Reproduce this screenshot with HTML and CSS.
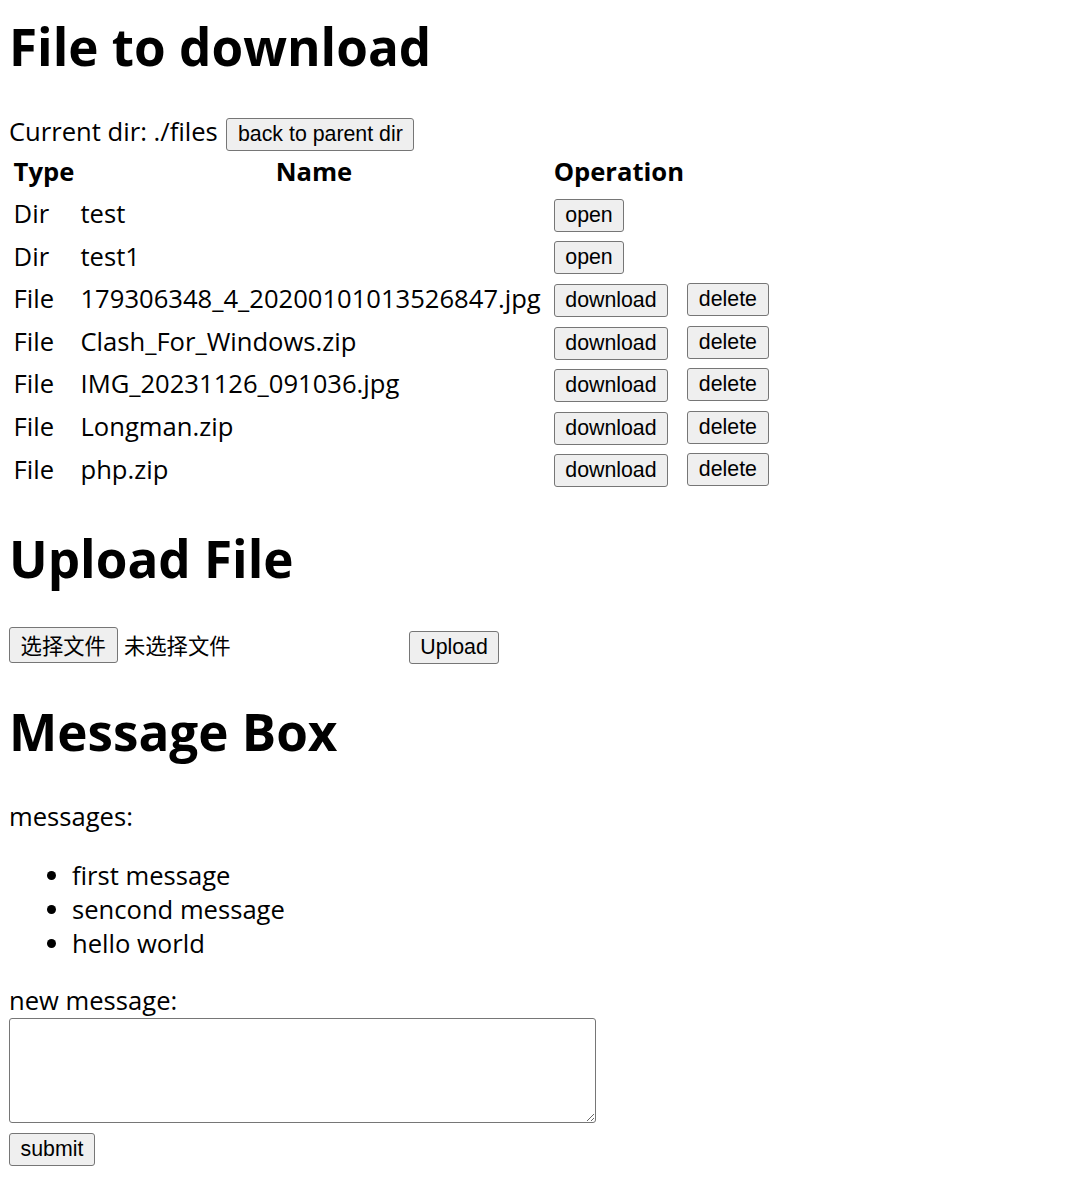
FILE: index.html
```html
<!DOCTYPE html>
<html lang="en">
<head>
<meta charset="utf-8">
<title>File Server</title>
<link rel="stylesheet" href="styles.css">
</head>
<body>
<h1 class="title first">File to download</h1>
<div class="cur">Current dir: ./files <button class="btn">back to parent dir</button></div>
<table class="files">
  <tr><th>Type</th><th class="name-col">Name</th><th>Operation</th></tr>
  <tr><td>Dir</td><td>test</td><td><button class="btn">open</button></td></tr>
  <tr><td>Dir</td><td>test1</td><td><button class="btn">open</button></td></tr>
  <tr><td>File</td><td>179306348_4_20200101013526847.jpg</td><td><button class="btn">download</button></td><td><button class="btn del">delete</button></td></tr>
  <tr><td>File</td><td>Clash_For_Windows.zip</td><td><button class="btn">download</button></td><td><button class="btn del">delete</button></td></tr>
  <tr><td>File</td><td>IMG_20231126_091036.jpg</td><td><button class="btn">download</button></td><td><button class="btn del">delete</button></td></tr>
  <tr><td>File</td><td>Longman.zip</td><td><button class="btn">download</button></td><td><button class="btn del">delete</button></td></tr>
  <tr><td>File</td><td>php.zip</td><td><button class="btn">download</button></td><td><button class="btn del">delete</button></td></tr>
</table>

<h1 class="title">Upload File</h1>
<form class="upload">
  <span class="file"><button type="button" class="btn pick">选择文件</button><span class="none">未选择文件</span></span>
  <button type="button" class="btn">Upload</button>
</form>

<h1 class="title">Message Box</h1>
<p class="label">messages:</p>
<ul class="msgs">
  <li>first message</li>
  <li>sencond message</li>
  <li>hello world</li>
</ul>
<form class="newmsg">
  <div class="label">new message:</div>
  <textarea class="area"></textarea>
  <button type="button" class="btn">submit</button>
</form>
</body>
</html>
```
FILE: styles.css
```css
body {
  margin: 13px 8px 8px 9px;
  font-family: "Open Sans", "Noto Sans CJK SC", sans-serif;
  font-size: 25.6px;
  line-height: 1.32;
  color: #000;
  background: #fff;
}

.title {
  font-size: 51.2px;
  font-weight: 700;
  line-height: 1.32;
  margin: 34.3px 0;
}

.title.first {
  margin-top: 0;
}

.btn {
  font-family: "Liberation Sans", Arial, sans-serif;
  font-size: 21.33px;
  line-height: normal;
  padding: 3px 10.6px;
  margin: 0;
  border: 1px solid #767676;
  border-radius: 3px;
  background: #efefef;
  color: #000;
}

.cur .btn {
  margin-left: 2px;
}

.files {
  border-spacing: 3.2px;
  border-collapse: separate;
  margin-bottom: -2px;
}

.files th,
.files td {
  padding: 1.6px 1.6px 2px;
}

.files th {
  font-weight: 700;
}

.files .name-col {
  width: 467px;
}

.files td {
  text-align: left;
}

.del {
  vertical-align: 2px;
  margin-left: -3px;
}

.upload {
  margin: 0;
}

.file {
  display: inline-block;
  width: 393px;
}

.pick {
  font-family: "Noto Sans CJK SC", sans-serif;
  line-height: 28px;
  margin-right: 6.4px;
}

.none {
  font-family: "Noto Sans CJK SC", sans-serif;
  font-size: 21.33px;
}

.label {
  margin: 0;
}

p.label {
  margin: 25.6px 0;
}

.msgs {
  margin: 25.6px 0 23.6px;
  padding-left: 63px;
}

.newmsg {
  margin: 0;
}

.area {
  display: block;
  box-sizing: border-box;
  width: 587px;
  height: 105px;
  margin: 0 0 7px 0;
  border: 1px solid #767676;
  border-radius: 3px;
  padding: 3px;
}
```
